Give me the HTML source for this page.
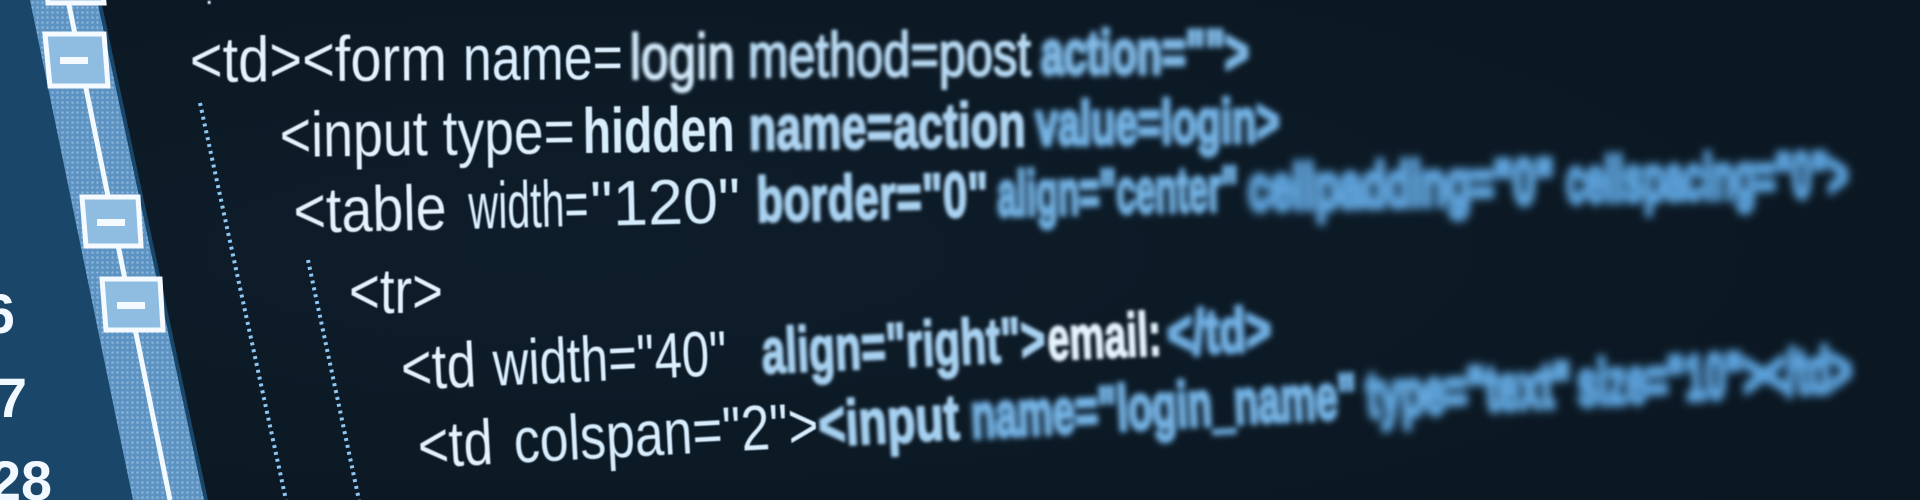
<!DOCTYPE html>
<html><head><meta charset="utf-8"><style>
html,body{margin:0;padding:0;background:#0c1925;}
svg{display:block}
text{font-family:"Liberation Sans",sans-serif;}
.m{stroke-width:2;stroke-linejoin:round}
.f{stroke-width:4;stroke-linejoin:round}
.g{stroke-width:6;stroke-linejoin:round}
</style></head><body>
<svg width="1920" height="500" viewBox="0 0 1920 500" xmlns="http://www.w3.org/2000/svg">
<defs>
<filter id="b1" x="-10%" y="-30%" width="120%" height="160%"><feGaussianBlur stdDeviation="0.6"/></filter>
<filter id="b2" x="-10%" y="-30%" width="120%" height="160%"><feGaussianBlur stdDeviation="1.6"/></filter>
<filter id="b3" x="-10%" y="-40%" width="120%" height="180%"><feGaussianBlur stdDeviation="2.8"/></filter>
<filter id="b4" x="-10%" y="-50%" width="120%" height="200%"><feGaussianBlur stdDeviation="4.2"/></filter>
<radialGradient id="bg" cx="0.3" cy="0.5" r="0.9"><stop offset="0" stop-color="#0e1d2a"/><stop offset="1" stop-color="#0a1620"/></radialGradient>
<pattern id="dots" width="5" height="5" patternUnits="userSpaceOnUse"><circle cx="2.5" cy="2.5" r="1.3" fill="#d8ecff" opacity="0.35"/></pattern>
</defs>
<rect width="1920" height="500" fill="url(#bg)"/>

<!-- left panel -->
<polygon points="0,0 101,0 208,500 0,500" fill="#1a4669"/>
<polygon points="30,0 97,0 204,500 133,500" fill="#5c93c2"/>
<polygon points="30,0 97,0 204,500 133,500" fill="url(#dots)"/>
<line x1="68" y1="0" x2="170" y2="500" stroke="#f2f9ff" stroke-width="5"/>
<g stroke="#f4faff" stroke-width="5" fill="#8fbde2">
<polygon points="45,-30 101,-30 104,3 48,3"/>
<polygon points="45,34 104,34 108,86 50,86"/>
<polygon points="82,197 138,197 141,246 86,246"/>
<polygon points="102,279 160,279 163,330 106,330"/>
</g>
<g fill="#f4faff">
<rect x="60" y="57" width="28" height="7"/>
<rect x="97" y="219" width="28" height="7"/>
<rect x="117" y="302" width="28" height="7"/>
</g>
<g fill="#f2f8ff" font-weight="bold" font-size="56" text-anchor="end">
<text x="15" y="333">6</text>
<text x="27" y="417">27</text>
<text x="52" y="500" textLength="62" lengthAdjust="spacingAndGlyphs">28</text>
</g>

<!-- dotted guides -->
<line x1="200" y1="103" x2="286" y2="500" stroke="#8cc6f2" stroke-width="4" stroke-dasharray="3 4"/>
<line x1="308" y1="260" x2="359" y2="500" stroke="#8cc6f2" stroke-width="4" stroke-dasharray="3 4"/>
<text x="205" y="4" fill="#cfe6f8" font-size="30" filter="url(#b1)">.</text>

<!-- line 1 -->
<g transform="rotate(-0.38 190 82)" font-size="64">
<text x="190" y="82" fill="#e4f2fc" filter="url(#b1)" textLength="257" lengthAdjust="spacingAndGlyphs">&lt;td&gt;&lt;form</text>
<text x="463" y="82" fill="#dcefff" filter="url(#b1)" textLength="160" lengthAdjust="spacingAndGlyphs">name=</text>
<text x="630" y="82" fill="#d4ebfb" stroke="#d4ebfb" class="m" filter="url(#b2)" textLength="105" lengthAdjust="spacingAndGlyphs" font-size="64">login</text>
<text x="748" y="81" fill="#b8daf3" stroke="#b8daf3" class="m" filter="url(#b2)" textLength="283" lengthAdjust="spacingAndGlyphs" font-size="63">method=post</text>
<text x="1041" y="80" fill="#8cc2ec" stroke="#79b5e4" class="f" filter="url(#b3)" font-weight="bold" textLength="208" lengthAdjust="spacingAndGlyphs" font-size="62">action=""&gt;</text>
</g>

<!-- line 2 -->
<g transform="rotate(-0.74 280 157)" font-size="64">
<text x="280" y="157" fill="#e4f2fc" filter="url(#b1)" textLength="148" lengthAdjust="spacingAndGlyphs">&lt;input</text>
<text x="443" y="157" fill="#e0f0fc" filter="url(#b1)" textLength="132" lengthAdjust="spacingAndGlyphs">type=</text>
<text x="583" y="157" fill="#d8edfc" filter="url(#b1)" font-weight="bold" textLength="152" lengthAdjust="spacingAndGlyphs">hidden</text>
<text x="749" y="156" fill="#aed4f1" stroke="#aed4f1" class="m" filter="url(#b2)" font-weight="bold" textLength="277" lengthAdjust="spacingAndGlyphs" font-size="63">name=action</text>
<text x="1036" y="155" fill="#80bbe8" stroke="#6eaee2" class="f" filter="url(#b3)" font-weight="bold" textLength="244" lengthAdjust="spacingAndGlyphs" font-size="62">value=login&gt;</text>
</g>

<!-- line 3 -->
<g transform="rotate(-1.36 294 233)" font-size="64">
<text x="294" y="233" fill="#e4f2fc" filter="url(#b1)" textLength="153" lengthAdjust="spacingAndGlyphs">&lt;table</text>
<text x="469" y="233" fill="#dcefff" filter="url(#b1)" textLength="120" lengthAdjust="spacingAndGlyphs" font-size="66">width=</text>
<text x="591" y="233" fill="#d4ebfb" filter="url(#b1)" textLength="150" lengthAdjust="spacingAndGlyphs">"120"</text>
<text x="757" y="233" fill="#a9d2f1" stroke="#a9d2f1" class="m" filter="url(#b2)" font-weight="bold" textLength="232" lengthAdjust="spacingAndGlyphs" font-size="64">border="0"</text>
<text x="998" y="233" fill="#7db9e6" stroke="#6cacdf" class="f" filter="url(#b3)" font-weight="bold" textLength="241" lengthAdjust="spacingAndGlyphs" font-size="64">align="center"</text>
<text x="1249" y="233" fill="#6eaee2" stroke="#5da3dc" class="g" filter="url(#b4)" font-weight="bold" textLength="306" lengthAdjust="spacingAndGlyphs" font-size="64">cellpadding="0"</text>
<text x="1567" y="233" fill="#6aaae0" stroke="#5aa0da" class="g" filter="url(#b4)" font-weight="bold" textLength="282" lengthAdjust="spacingAndGlyphs" font-size="64">cellspacing="0"&gt;</text>
</g>

<!-- line 4 -->
<text x="349" y="313" font-size="64" fill="#e4f2fc" filter="url(#b1)" textLength="94" lengthAdjust="spacingAndGlyphs">&lt;tr&gt;</text>

<!-- line 5 -->
<g transform="rotate(-2.63 402 390)" font-size="64">
<text x="402" y="390" fill="#e4f2fc" filter="url(#b1)" textLength="75" lengthAdjust="spacingAndGlyphs">&lt;td</text>
<text x="494" y="390" fill="#dcefff" filter="url(#b1)" textLength="234" lengthAdjust="spacingAndGlyphs">width="40"</text>
<text x="763" y="390" fill="#a8d1f1" stroke="#a8d1f1" class="m" filter="url(#b2)" font-weight="bold" textLength="284" lengthAdjust="spacingAndGlyphs" font-size="64">align="right"&gt;</text>
<text x="1049" y="390" fill="#e6f4ff" stroke="#e6f4ff" class="m" filter="url(#b2)" font-weight="bold" textLength="114" lengthAdjust="spacingAndGlyphs" font-size="62">email:</text>
<text x="1169" y="390" fill="#7cb8e6" stroke="#6aaae0" class="f" filter="url(#b3)" font-weight="bold" textLength="104" lengthAdjust="spacingAndGlyphs" font-size="62">&lt;/td&gt;</text>
</g>

<!-- line 6 -->
<g transform="rotate(-3.07 419 468)" font-size="64">
<text x="419" y="468" fill="#e4f2fc" filter="url(#b1)" textLength="75" lengthAdjust="spacingAndGlyphs">&lt;td</text>
<text x="515" y="468" fill="#d8edfd" filter="url(#b1)" textLength="305" lengthAdjust="spacingAndGlyphs">colspan="2"&gt;</text>
<text x="820" y="468" fill="#a6d0f0" stroke="#a6d0f0" class="m" filter="url(#b2)" font-weight="bold" textLength="141" lengthAdjust="spacingAndGlyphs" font-size="64">&lt;input</text>
<text x="973" y="468" fill="#80bbe8" stroke="#6eaee2" class="f" filter="url(#b3)" font-weight="bold" textLength="386" lengthAdjust="spacingAndGlyphs" font-size="64">name="login_name"</text>
<text x="1369" y="468" fill="#70aee2" stroke="#5ea4dc" class="g" filter="url(#b4)" font-weight="bold" textLength="205" lengthAdjust="spacingAndGlyphs" font-size="64">type="text"</text>
<text x="1580" y="468" fill="#6aaae0" stroke="#5aa0da" class="g" filter="url(#b4)" font-weight="bold" textLength="275" lengthAdjust="spacingAndGlyphs" font-size="64">size="10"&gt;&lt;/td&gt;</text>
</g>
</svg>
</body></html>
